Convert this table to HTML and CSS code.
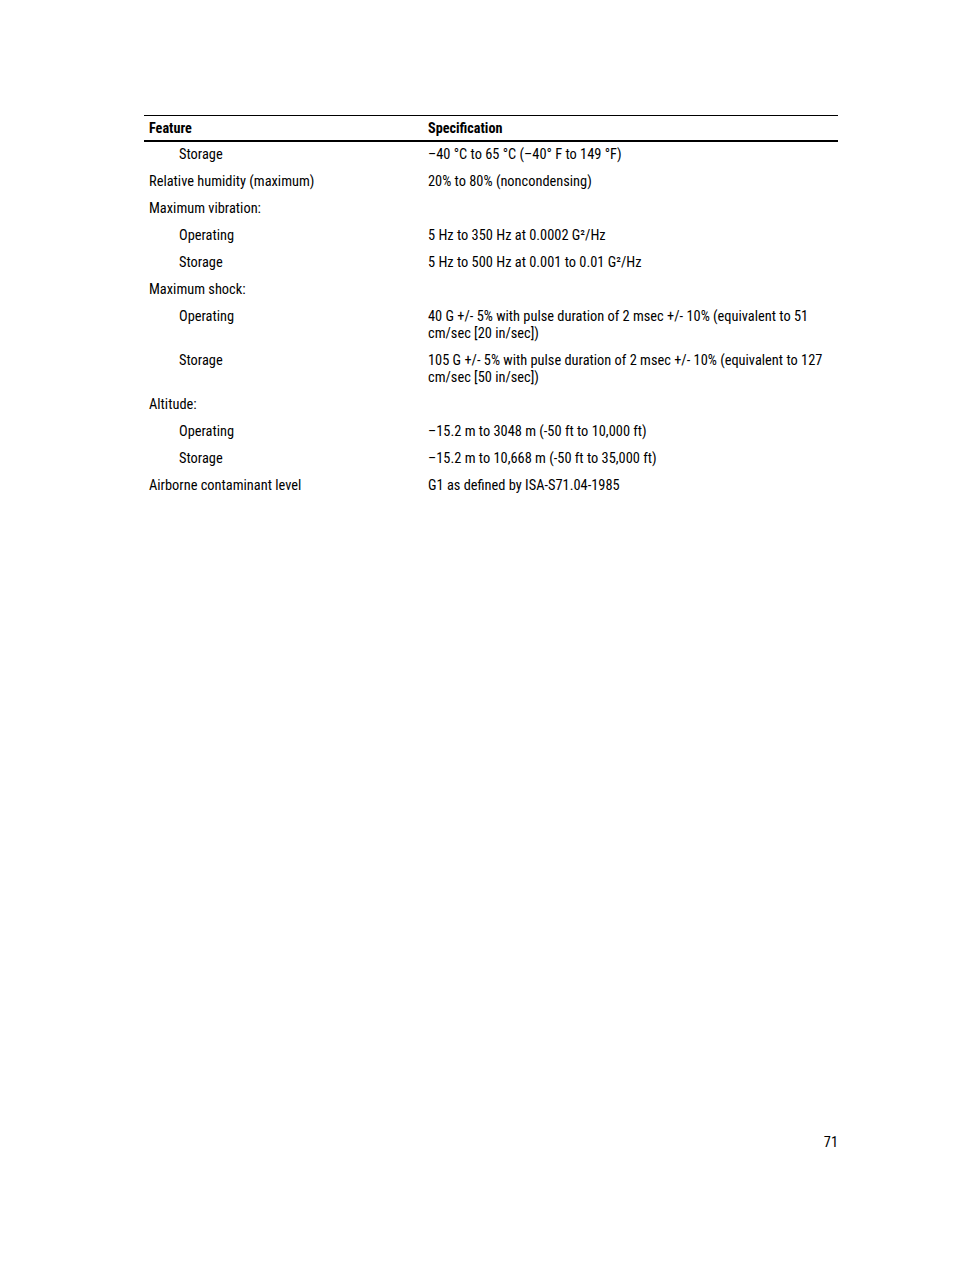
FILE: index.html
```html
<!DOCTYPE html>
<html lang="en">
<head>
<meta charset="utf-8">
<title>Specifications</title>
<link rel="stylesheet" href="styles.css">
</head>
<body>
<div class="page">
  <table class="spec">
    <thead>
      <tr><th class="c1">Feature</th><th class="c2">Specification</th></tr>
    </thead>
    <tbody>
      <tr><td class="sub">Storage</td><td>–40 °C to 65 °C (–40° F to 149 °F)</td></tr>
      <tr><td>Relative humidity (maximum)</td><td>20% to 80% (noncondensing)</td></tr>
      <tr><td>Maximum vibration:</td><td></td></tr>
      <tr><td class="sub">Operating</td><td>5 Hz to 350 Hz at 0.0002 G²/Hz</td></tr>
      <tr><td class="sub">Storage</td><td>5 Hz to 500 Hz at 0.001 to 0.01 G²/Hz</td></tr>
      <tr><td>Maximum shock:</td><td></td></tr>
      <tr><td class="sub">Operating</td><td>40 G +/- 5% with pulse duration of 2 msec +/- 10% (equivalent to 51 cm/sec [20 in/sec])</td></tr>
      <tr><td class="sub">Storage</td><td>105 G +/- 5% with pulse duration of 2 msec +/- 10% (equivalent to 127 cm/sec [50 in/sec])</td></tr>
      <tr><td>Altitude:</td><td></td></tr>
      <tr><td class="sub">Operating</td><td>–15.2 m to 3048 m (-50 ft to 10,000 ft)</td></tr>
      <tr><td class="sub">Storage</td><td>–15.2 m to 10,668 m (-50 ft to 35,000 ft)</td></tr>
      <tr><td>Airborne contaminant level</td><td>G1 as defined by ISA-S71.04-1985</td></tr>
    </tbody>
  </table>
  <div class="spacer"></div>
  <div class="pagenum">71</div>
</div>
</body>
</html>
```
FILE: styles.css
```css
html, body {
  margin: 0;
  padding: 0;
  background: #ffffff;
}
body {
  font-family: "Roboto Condensed", "Liberation Sans Narrow", "DejaVu Sans Condensed", sans-serif;
  font-size: 14.4px;
  color: #000000;
}
.page {
  width: 954px;
  height: 1268px;
  box-sizing: border-box;
  padding: 115px 116px 0 144px;
  display: flex;
  flex-direction: column;
}
.spec {
  width: 694px;
  border-collapse: collapse;
  table-layout: fixed;
}
.spec th {
  text-align: left;
  font-weight: bold;
  padding: 4px 5px 3px 5px;
  line-height: 17px;
  border-top: 1px solid #000;
  border-bottom: 2px solid #000;
  font-size: 14.2px;
}
.spec .c1 { width: 269px; }
.spec td {
  vertical-align: top;
  padding: 4px 5px 6px 5px;
  line-height: 17px;
}
.spec td.sub {
  padding-left: 35px;
}
.spacer {
  height: 634px;
}
.pagenum {
  text-align: right;
  line-height: 17px;
}
```
